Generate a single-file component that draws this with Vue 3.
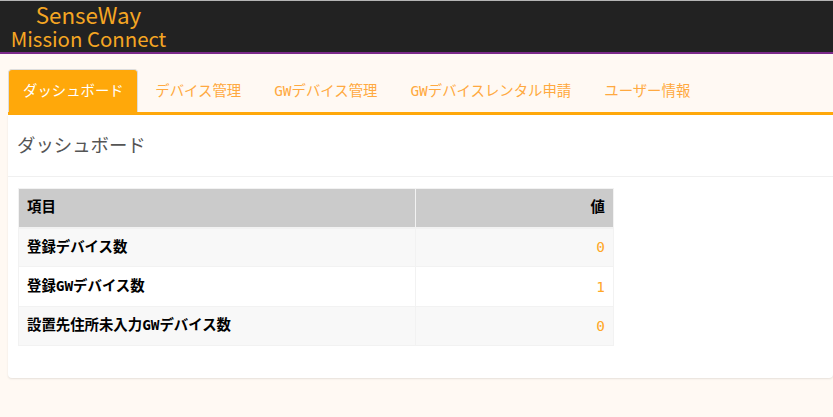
<script setup>
const tabs = ["ダッシュボード", "デバイス管理", "GWデバイス管理", "GWデバイスレンタル申請", "ユーザー情報"]
const rows = [
  { name: "登録デバイス数", value: 0 },
  { name: "登録GWデバイス数", value: 1 },
  { name: "設置先住所未入力GWデバイス数", value: 0 }
]
</script>

<template>
  <div class="page">
    <header class="navbar">
      <div class="brand">
        <span class="brand-top">SenseWay</span>
        <span class="brand-bottom">Mission Connect</span>
      </div>
    </header>
    <main class="content">
      <ul class="tabs">
        <li v-for="(tab, index) in tabs" :key="tab" class="tab" :class="{ active: index === 0 }">{{ tab }}</li>
      </ul>
      <section class="card">
        <h2 class="card-title">ダッシュボード</h2>
        <div class="card-body">
          <table class="summary">
            <thead>
              <tr>
                <th>項目</th>
                <th class="num">値</th>
              </tr>
            </thead>
            <tbody>
              <tr v-for="row in rows" :key="row.name">
                <th>{{ row.name }}</th>
                <td class="num">{{ row.value }}</td>
              </tr>
            </tbody>
          </table>
        </div>
      </section>
    </main>
  </div>
</template>

<style>
html,
body {
  margin: 0;
  overflow: hidden;
  background: #fff9f3;
}
</style>

<style scoped>
.page {
  height: 417px;
  background: #fff9f3;
  font-family: "Noto Sans CJK JP", sans-serif;
}

.navbar {
  height: 50px;
  padding-top: 1px;
  background: #222;
  border-top: 1px solid #b5b5b5;
  border-bottom: 2px solid #7b2a8a;
}

.brand {
  width: 155px;
  padding-left: 11px;
  display: flex;
  flex-direction: column;
  align-items: center;
  color: #f5a623;
  line-height: 24px;
  white-space: nowrap;
}

.brand-top {
  font-size: 22.4px;
}

.brand-bottom {
  font-size: 20.4px;
}

.content {
  padding: 15px 0 0 8px;
}

.tabs {
  display: flex;
  margin: 0;
  padding: 0;
  list-style: none;
  border-bottom: 3px solid #ffa80a;
}

.tab {
  height: 43px;
  padding: 0 16.5px;
  box-sizing: border-box;
  line-height: 45px;
  font-family: "DejaVu Sans Mono", "Noto Sans CJK JP", monospace;
  font-size: 14.4px;
  color: #ffa940;
  white-space: nowrap;
}

.tab.active {
  padding: 0 13.5px 0 14px;
  margin-right: 0.5px;
  line-height: 43px;
  background: #ffa80a;
  border: 1px solid #ddd;
  border-bottom: none;
  border-radius: 4px 4px 0 0;
  color: #fff;
}

.card {
  height: 263px;
  background: #fff;
  border-radius: 0 0 4px 4px;
  box-shadow: 0 1px 2px rgba(0, 0, 0, 0.1);
}

.card-title {
  height: 62px;
  margin: 0;
  padding-left: 9px;
  line-height: 59px;
  font-size: 18.4px;
  font-weight: 400;
  color: #555;
  border-bottom: 1px solid #f0f0f0;
  box-sizing: border-box;
}

.card-body {
  padding: 11px 10px;
}

.summary {
  width: 596px;
  border-collapse: collapse;
  table-layout: fixed;
  font-family: "DejaVu Sans Mono", "Noto Sans CJK JP", monospace;
  font-size: 14.4px;
}

.summary th,
.summary td {
  height: 39.4px;
  padding: 0 8px;
  border: 1px solid #f2f2f2;
  text-align: left;
  box-sizing: border-box;
  color: #000;
}

.summary thead th {
  height: 39px;
  padding-bottom: 4px;
  background: #cbcbcb;
  border-bottom-width: 2px;
}

.summary tbody th {
  padding-bottom: 4px;
}

.summary tbody tr:nth-child(odd) {
  background: #f8f8f8;
}

.summary .num {
  width: 198px;
  text-align: right;
}

.summary td.num {
  color: #ffa726;
}
</style>
